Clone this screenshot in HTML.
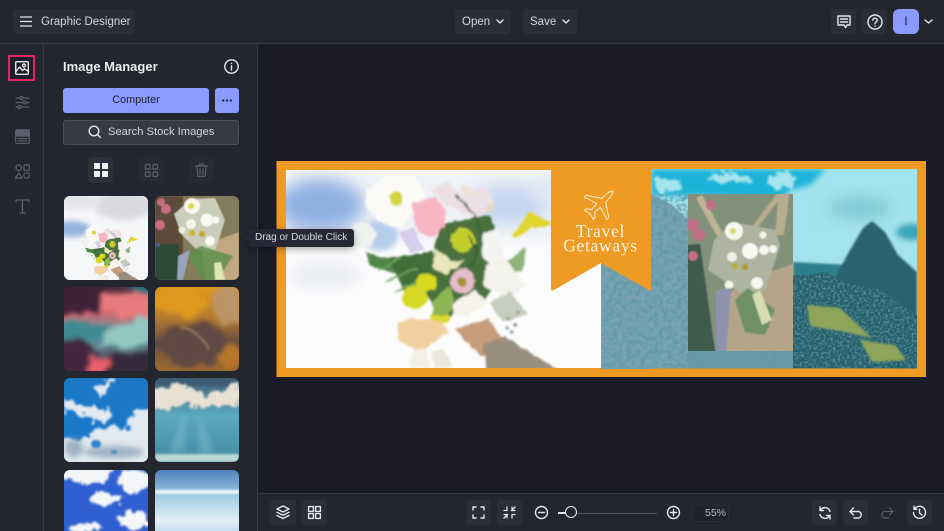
<!DOCTYPE html>
<html lang="en"><head><meta charset="utf-8"><title>Graphic Designer</title>
<style>
html,body{margin:0;padding:0;background:#1b1c28;width:944px;height:531px;overflow:hidden}
#w{position:absolute;left:0;top:0;width:944px;height:531px;overflow:hidden;font-family:"Liberation Sans",sans-serif;color:#d9dae0;background:#1b1c28}
.a{position:absolute}
.b{position:absolute;background:#2b2d3a;border-radius:4px}
.t{position:absolute;white-space:nowrap}
svg{position:absolute;overflow:visible}
.i{fill:none;stroke:#e6e7ec;stroke-width:1.4;stroke-linecap:round;stroke-linejoin:round}
.d{fill:none;stroke:#5c5f70;stroke-width:1.2;stroke-linecap:round;stroke-linejoin:round}
.th{position:absolute;width:84px;height:84px;border-radius:6px;overflow:hidden}
.th svg{left:0;top:0;overflow:hidden}
</style></head><body><div id="w">

<svg width="0" height="0" style="position:absolute"><defs>
<filter id="b1" x="-30%" y="-30%" width="160%" height="160%"><feGaussianBlur stdDeviation="1"/></filter>
<filter id="b3" x="-30%" y="-30%" width="160%" height="160%"><feGaussianBlur stdDeviation="3"/></filter>
<filter id="b8" x="-50%" y="-50%" width="200%" height="200%"><feGaussianBlur stdDeviation="8"/></filter>
<filter id="soft" x="-10%" y="-10%" width="120%" height="120%"><feTurbulence type="fractalNoise" baseFrequency=".13" numOctaves="2" seed="3" result="n"/><feDisplacementMap in="SourceGraphic" in2="n" scale="5" xChannelSelector="R" yChannelSelector="G"/><feGaussianBlur stdDeviation="1"/></filter>
<filter id="cloud" x="-20%" y="-20%" width="140%" height="140%"><feTurbulence type="fractalNoise" baseFrequency=".11" numOctaves="4" seed="7" result="n"/><feDisplacementMap in="SourceGraphic" in2="n" scale="14" xChannelSelector="R" yChannelSelector="G"/><feGaussianBlur stdDeviation="1.100"/></filter>
<filter id="cloudb" x="-20%" y="-20%" width="140%" height="140%"><feTurbulence type="fractalNoise" baseFrequency=".05" numOctaves="3" seed="5" result="n"/><feDisplacementMap in="SourceGraphic" in2="n" scale="18" xChannelSelector="R" yChannelSelector="G"/><feGaussianBlur stdDeviation="2.400"/></filter>
<filter id="rock" x="0" y="0" width="100%" height="100%"><feTurbulence type="fractalNoise" baseFrequency=".22" numOctaves="3" seed="4"/><feColorMatrix values="0 0 0 0 .12  0 0 0 0 .32  0 0 0 0 .39  3.200 0 0 0 -1.150"/></filter>
<filter id="rock2" x="0" y="0" width="100%" height="100%"><feTurbulence type="fractalNoise" baseFrequency=".42" numOctaves="2" seed="9"/><feColorMatrix values="0 0 0 0 .62  0 0 0 0 .78  0 0 0 0 .82  2.2 0 0 0 -.9"/></filter>
<linearGradient id="sun" x1="0" y1="0" x2="0" y2="1"><stop offset="0" stop-color="#4a2a40"/><stop offset=".3" stop-color="#cf6a72"/><stop offset=".6" stop-color="#5d9aa3"/><stop offset="1" stop-color="#4c2c40"/></linearGradient>
<linearGradient id="gold" x1="0" y1="0" x2="0" y2="1"><stop offset="0" stop-color="#e09a1e"/><stop offset=".35" stop-color="#b77c2e"/><stop offset=".65" stop-color="#6d5140"/><stop offset="1" stop-color="#9c6a30"/></linearGradient>
<linearGradient id="teal" x1="0" y1="0" x2="0" y2="1"><stop offset="0" stop-color="#3f5f74"/><stop offset=".45" stop-color="#5ca9bf"/><stop offset="1" stop-color="#3f8ba3"/></linearGradient>
<linearGradient id="hor" x1="0" y1="0" x2="0" y2="1"><stop offset="0" stop-color="#4f80bb"/><stop offset=".35" stop-color="#a9d3e8"/><stop offset=".6" stop-color="#e3eef6"/><stop offset="1" stop-color="#8db9e0"/></linearGradient>

<g id="bouquet">
 <path d="M365 252L400 262 432 292 402 276 370 266Z" fill="#4f8646"/>
 <path d="M388 258L432 252 436 300 405 292Z" fill="#3f7039"/>
 <path d="M440 225L490 215 505 270 480 308 440 320 425 290Z" fill="#496f3c"/>
 <path d="M505 262L526 248 522 272 502 276Z" fill="#8db27a"/>
 <path d="M378 270L400 258M385 282L418 268M395 292L428 276" fill="none" stroke="#6fa35f" stroke-width="2"/>
 <circle cx="363" cy="235" r="13" fill="#eef1ee"/>
 <path d="M366 190L392 172 416 176 426 196 412 212 400 228 378 222 366 206Z" fill="#fbfaf6"/>
 <circle cx="396" cy="198" r="7" fill="#d3d63a"/>
 <path d="M411 204L435 197 446 210 444 228 430 237 417 230Z" fill="#f8b6c4"/>
 <path d="M430 190L448 182 462 196 486 186 494 202 478 218 446 205Z" fill="#ece0e4"/>
 <circle cx="466" cy="190" r="5" fill="#f0e2d5"/>
 <circle cx="490" cy="208" r="3.500" fill="#e4dcc0"/>
 <path d="M399 232L414 228 424 250 410 252Z" fill="#d6cdea"/>
 <path d="M512 236L530 212 550 222 551 226 530 228 516 238Z" fill="#e2d52e"/>
 <circle cx="463" cy="240" r="12" fill="#c4cf2d"/>
 <path d="M482 232L498 230 504 252 498 268 483 258Z" fill="#f4f5f2"/>
 <path d="M486 264L505 258 526 286 506 298 483 286Z" fill="#f4f3ee"/>
 <path d="M435 248L455 262 466 260 446 274 432 268Z" fill="#e9e9bb"/>
 <path d="M455 195L475 215 482 235M468 235L478 250 470 268" fill="none" stroke="#36592f" stroke-width="1.600"/>
 <circle cx="463" cy="281" r="12.500" fill="#e7bccb"/>
 <circle cx="462" cy="282" r="4.500" fill="#a49336"/>
 <ellipse cx="427" cy="282" rx="10" ry="9" fill="#d9da1e"/>
 <ellipse cx="415" cy="297" rx="12" ry="12" fill="#d6da25"/>
 <ellipse cx="440" cy="318" rx="10" ry="6" fill="#dada2a"/>
 <path d="M433 302L450 286 455 305 445 316 432 316Z" fill="#8db653"/>
 <path d="M453 303L475 290 488 302 468 316 452 316Z" fill="#f6f4ea"/>
 <path d="M489 302L510 292 528 314 502 322Z" fill="#c7cdbc"/>
 <path d="M398 322L412 318 440 322 450 332 430 345 418 352 398 340Z" fill="#f2cf9f"/>
 <path d="M412 350L426 348 432 368 411 368Z" fill="#f3efe6"/>
 <path d="M432 350L444 350 453 368 434 368Z" fill="#ebe7db"/>
 <path d="M455 330L488 318 503 340 490 346 483 358 470 345Z" fill="#c69c7b"/>
 <path d="M483 344L505 337 558 370 487 370Z" fill="#9a8e7c"/>
 <g fill="#6a6e66"><circle cx="508" cy="318" r="1.400"/><circle cx="515" cy="325" r="1.400"/><circle cx="507" cy="328" r="1.400"/><circle cx="518" cy="312" r="1.400"/><circle cx="512" cy="332" r="1.400"/></g>
</g>

<g id="flat">
 <rect width="84" height="84" fill="#a89070"/>
 <rect x="0" width="34" height="84" fill="#5e4a3a"/>
 <rect x="0" y="48" width="24" height="36" fill="#2c4a34"/>
 <path d="M28 0L84 0 84 84 28 84Z" fill="#847a5c"/>
 <path d="M46 50L84 36 84 84 50 84Z" fill="#c2a783"/>
 <g fill="#c96c80"><circle cx="6" cy="6" r="4"/><circle cx="11" cy="13" r="5"/><circle cx="5" cy="29" r="5"/></g>
 <circle cx="3" cy="49" r="2.500" fill="#4c5b8a"/>
 <path d="M19 18L36 3 60 2 70 24 60 56 42 54 26 38Z" fill="#c9cdb9"/>
 <circle cx="37" cy="10" r="8" fill="#f9f8ee"/><circle cx="36" cy="10" r="3" fill="#dad84c"/>
 <circle cx="52" cy="24" r="6.500" fill="#fafaf5"/><circle cx="61" cy="24" r="3.500" fill="#fafaf5"/><circle cx="55" cy="45" r="5" fill="#fafaf5"/><circle cx="36" cy="28" r="5" fill="#f5f5e8"/><circle cx="27" cy="34" r="3.500" fill="#eeeedd"/>
 <circle cx="37" cy="37" r="3" fill="#c4bb30"/><circle cx="47" cy="38" r="3" fill="#c4a730"/>
 <path d="M32 58L46 50 78 60 62 84 48 84Z" fill="#5f8f4c" opacity=".85"/>
 <path d="M23 60L35 54 28 84 22 84Z" fill="#97a6bc"/>
 <path d="M59 67L66 66 70 84 60 84Z" fill="#dfe6b5"/>
</g>
</defs></svg>

<!-- chrome -->
<div class="a" style="left:0;top:0;width:944px;height:43px;background:#23252f"></div>
<div class="a" style="left:0;top:43px;width:944px;height:1px;background:#383a47"></div>
<div class="a" style="left:0;top:44px;width:43px;height:487px;background:#23252f"></div>
<div class="a" style="left:43px;top:44px;width:1px;height:487px;background:#383a47"></div>
<div class="a" style="left:44px;top:44px;width:213px;height:487px;background:#23252f"></div>
<div class="a" style="left:257px;top:44px;width:1px;height:487px;background:#383a47"></div>
<div class="a" style="left:258px;top:493px;width:686px;height:38px;background:#23252f"></div>
<div class="a" style="left:258px;top:493px;width:686px;height:1px;background:#383a47"></div>

<!-- top left -->
<div class="b" style="left:13px;top:9px;width:122px;height:25px"></div>
<svg style="left:19px;top:15px" width="14" height="13"><path d="M1 2H13M1 6.500H13M1 11H13" fill="none" stroke="#e6e7ec" stroke-width="1.300"/></svg>
<div class="t" style="left:41px;top:14.500px;font-size:11.500px;line-height:15px;color:#d4d5dc">Graphic Designer</div>

<!-- top center -->
<div class="b" style="left:455px;top:9px;width:56px;height:25px"></div>
<div class="t" style="left:462px;top:14.500px;font-size:11.500px;line-height:15px;color:#d4d5dc">Open</div>
<svg style="left:496px;top:19px" width="8" height="6"><path d="M1 1L4 4 7 1" class="i" stroke-width="1.100"/></svg>
<div class="b" style="left:523px;top:9px;width:54px;height:25px"></div>
<div class="t" style="left:530px;top:14.500px;font-size:11.500px;line-height:15px;color:#d4d5dc">Save</div>
<svg style="left:562px;top:19px" width="8" height="6"><path d="M1 1L4 4 7 1" class="i" stroke-width="1.100"/></svg>

<!-- top right -->
<div class="b" style="left:831px;top:9px;width:25px;height:25px"></div>
<svg style="left:837px;top:15px" width="14" height="14"><path d="M1 1H13V10H10L8.500 12.500 7 10H1Z" class="i" stroke-width="1.200"/><path d="M3.500 4H10.500M3.500 7H10.500" class="i" stroke-width="1"/></svg>
<div class="b" style="left:862px;top:9px;width:25px;height:25px"></div>
<svg style="left:867px;top:14px" width="16" height="16"><circle cx="8" cy="8" r="7" class="i" stroke-width="1.200"/><path d="M5.800 6.300C5.800 3.500 10.200 3.500 10.200 6.300 10.200 8 8 8 8 9.700" class="i" stroke-width="1.200"/><circle cx="8" cy="12" r=".8" fill="#e6e7ec"/></svg>
<div class="a" style="left:893px;top:9px;width:26px;height:25px;background:#8b9aff;border-radius:6px"></div>
<div class="t" style="left:893px;top:14.500px;width:26px;text-align:center;font-size:11.500px;line-height:15px;color:#1c1e2b">I</div>
<svg style="left:924px;top:19px" width="9" height="6"><path d="M1 1L4.500 4 8 1" class="i" stroke-width="1.100"/></svg>

<!-- rail -->
<div class="a" style="left:8px;top:55px;width:23px;height:22px;border:2.500px solid #e4245f;border-radius:1px;background:#1d1e2a"></div>
<svg style="left:15px;top:61px" width="15" height="15"><rect x=".7" y=".7" width="12.600" height="12.600" rx="1" class="i"/><circle cx="9" cy="4.500" r="1.500" class="i" stroke-width="1"/><path d="M1 10.500L4.500 6 7.500 9.500 9.500 7.800 13.500 10.500" class="i" stroke-width="1.100"/></svg>
<svg style="left:15px;top:95px" width="15" height="15"><path d="M1 3H5M8 3H14M1 7.500H8M11 7.500H14M1 12H3M6 12H14" class="d"/><circle cx="6.500" cy="3" r="1.500" class="d"/><circle cx="9.500" cy="7.500" r="1.500" class="d"/><circle cx="4.500" cy="12" r="1.500" class="d"/></svg>
<svg style="left:15px;top:129px" width="15" height="15"><rect x=".7" y=".7" width="13.600" height="13.600" rx="1" class="d"/><path d="M1 7H14" class="d"/><rect x="1" y="1" width="13" height="6" fill="#5c5f70"/><path d="M3 9.500H12M3 11.800H12" class="d"/></svg>
<svg style="left:15px;top:164px" width="15" height="15"><circle cx="3.700" cy="3.700" r="2.800" class="d"/><rect x="9" y="1" width="5.300" height="5.300" class="d"/><path d="M3.700 9L7 14H.5Z" class="d"/><circle cx="11.500" cy="11.500" r="2.800" class="d"/></svg>
<svg style="left:15px;top:199px" width="15" height="15"><path d="M1 3V1H14V3M7.500 1V14M5 14H10" class="d" stroke-width="1.300"/></svg>

<!-- panel -->
<div class="t" style="left:63px;top:58px;font-size:13px;line-height:17px;font-weight:700;color:#eceded">Image Manager</div>
<svg style="left:224px;top:59px" width="15" height="15"><circle cx="7.500" cy="7.500" r="6.700" class="i" stroke-width="1.100"/><path d="M7.500 7V11" class="i" stroke-width="1.300"/><circle cx="7.500" cy="4.500" r=".8" fill="#e6e7ec"/></svg>
<div class="a" style="left:63px;top:88px;width:146px;height:25px;background:#8b9aff;border-radius:3px"></div>
<div class="t" style="left:63px;top:93px;width:146px;text-align:center;font-size:10.800px;line-height:15px;color:#1c1e2b">Computer</div>
<div class="a" style="left:215px;top:88px;width:24px;height:25px;background:#8b9aff;border-radius:3px"></div>
<svg style="left:222px;top:99px" width="10" height="3"><circle cx="1.200" cy="1.500" r="1.100" fill="#1c1e2b"/><circle cx="5" cy="1.500" r="1.100" fill="#1c1e2b"/><circle cx="8.800" cy="1.500" r="1.100" fill="#1c1e2b"/></svg>
<div class="a" style="left:63px;top:120px;width:174px;height:23px;background:#373945;border:1px solid #4b4d5a;border-radius:3px"></div>
<svg style="left:88px;top:125px" width="14" height="14"><circle cx="6" cy="6" r="4.800" class="i" stroke-width="1.200"/><path d="M9.500 9.500L12.500 12.500" class="i" stroke-width="1.200"/></svg>
<div class="t" style="left:108px;top:125px;font-size:11.200px;line-height:15px;color:#d4d5dc">Search Stock Images</div>

<div class="b" style="left:88px;top:157px;width:25px;height:26px;background:#2d2f3b"></div>
<svg style="left:94px;top:163px" width="14" height="14"><g fill="#f1f1f3"><rect width="6" height="6" rx=".5"/><rect x="8" width="6" height="6" rx=".5"/><rect y="8" width="6" height="6" rx=".5"/><rect x="8" y="8" width="6" height="6" rx=".5"/></g></svg>
<div class="b" style="left:138px;top:157px;width:26px;height:26px;background:#272935"></div>
<svg style="left:145px;top:164px" width="13" height="13"><rect x=".5" y=".5" width="4.500" height="4.500" class="d"/><rect x="8" y=".5" width="4.500" height="4.500" class="d"/><rect x=".5" y="8" width="4.500" height="4.500" class="d"/><rect x="8" y="8" width="4.500" height="4.500" class="d"/></svg>
<div class="b" style="left:189px;top:157px;width:25px;height:26px;background:#272935"></div>
<svg style="left:195px;top:163px" width="13" height="14"><path d="M.5 3H12.500M4.500 3V1H8.500V3M2 3L2.800 13.300H10.200L11 3M5 6V11M8 6V11" class="d"/></svg>

<!-- thumbs -->
<div class="th" style="left:64px;top:196px;background:#f4f5f7"><svg width="84" height="84" viewBox="0 0 84 84">
 <rect width="84" height="84" fill="#f6f7f9"/><ellipse cx="8" cy="33" rx="18" ry="8" fill="#93b3dc" filter="url(#b3)"/><ellipse cx="60" cy="10" rx="30" ry="14" fill="#d9dade" filter="url(#b3)"/><ellipse cx="15" cy="6" rx="20" ry="8" fill="#e4e5e9" filter="url(#b3)"/>
 <g transform="translate(-81 -19) scale(.28)"><use href="#bouquet" filter="url(#soft)"/></g>
</svg></div>
<div class="th" style="left:155px;top:196px"><svg width="84" height="84" viewBox="0 0 84 84"><g filter="url(#b1)" style="filter:blur(.5px)"><rect x="-8" y="-8" width="100" height="100" fill="#8a7a5c"/><use href="#flat"/></g></svg></div>

<div class="th" style="left:64px;top:287px"><svg width="84" height="84" viewBox="0 0 84 84"><rect width="84" height="84" fill="url(#sun)"/>
 <g filter="url(#cloudb)">
 <path d="M54 -8L94 -8 94 10 72 8Z" fill="#1f6d78"/>
 <path d="M-8 -8H42L50 14 30 24 -8 34Z" fill="#3f2438"/>
 <path d="M44 4L94 10 90 32 54 32 36 22Z" fill="#e87a7c"/>
 <path d="M-8 40L30 34 50 44 30 52 -8 50Z" fill="#3e8a92"/>
 <path d="M34 58L60 36 94 30 94 54 55 62Z" fill="#93c6c0"/>
 <path d="M-8 50L24 50 32 64 20 94 -8 94Z" fill="#43283f"/>
 <path d="M34 94L44 70 94 60 94 94Z" fill="#352a3d"/>
 <path d="M16 94L30 70 44 78 42 94Z" fill="#e9616b"/>
 </g></svg></div>
<div class="th" style="left:155px;top:287px"><svg width="84" height="84" viewBox="0 0 84 84"><rect width="84" height="84" fill="url(#gold)"/>
 <g filter="url(#cloudb)"><ellipse cx="25" cy="15" rx="28" ry="13" fill="#df9a1c"/><ellipse cx="72" cy="18" rx="14" ry="20" fill="#bb9468"/><ellipse cx="38" cy="58" rx="38" ry="22" fill="#5f4a42"/><ellipse cx="75" cy="68" rx="12" ry="12" fill="#b8762a"/></g><path d="M26 40Q42 42 54 62" fill="none" stroke="#9a7a5a" stroke-width="2" filter="url(#b1)"/></svg></div>

<div class="th" style="left:64px;top:378px"><svg width="84" height="84" viewBox="0 0 84 84"><rect width="84" height="84" fill="#1a78c8"/>
 <g fill="#e2e9ef" filter="url(#cloud)"><path d="M0 20L20 28 46 30 50 40 30 45 10 32 0 36Z"/><path d="M32 8L50 0 42 14 36 22Z"/><path d="M-5 90V62L22 60 40 48 58 52 70 36 90 26V90Z"/></g>
 <g fill="#9fb2c4" filter="url(#b3)"><ellipse cx="50" cy="74" rx="30" ry="6"/><ellipse cx="10" cy="70" rx="9" ry="9"/></g>
 <g fill="#2a7fca" filter="url(#b1)"><ellipse cx="32" cy="66" rx="5" ry="4"/><ellipse cx="50" cy="74" rx="3" ry="1.500"/><ellipse cx="64" cy="50" rx="3" ry="3"/></g></svg></div>
<div class="th" style="left:155px;top:378px"><svg width="84" height="84" viewBox="0 0 84 84"><rect width="84" height="84" fill="url(#teal)"/>
 <rect width="84" height="8" fill="#3e5c72" filter="url(#b1)"/><path d="M-5 12L30 6 50 16 90 6V26L50 30 30 26 -5 36Z" fill="#e8e1d4" filter="url(#cloud)"/>
 <g fill="#a5d6df" opacity=".3" filter="url(#b3)"><path d="M30 34L14 74H30Z"/><path d="M44 36L44 76H60Z"/></g><rect y="76" width="84" height="8" fill="#bcd7d4" filter="url(#b1)"/></svg></div>

<div class="th" style="left:64px;top:470px"><svg width="84" height="84" viewBox="0 0 84 84"><rect width="84" height="84" fill="#2f5fd0"/>
 <g fill="#f4f6f8" filter="url(#cloud)"><path d="M-5 -5H50L42 12 22 16 8 10 -5 8Z"/><ellipse cx="70" cy="11" rx="16" ry="11"/><ellipse cx="42" cy="29" rx="16" ry="6"/><ellipse cx="70" cy="50" rx="16" ry="9"/><ellipse cx="22" cy="58" rx="16" ry="5"/></g></svg></div>
<div class="th" style="left:155px;top:470px"><svg width="84" height="84" viewBox="0 0 84 84"><rect width="84" height="84" fill="url(#hor)"/><rect y="20" width="84" height="4" fill="#eef6f8" filter="url(#b1)"/></svg></div>

<!-- design -->
<svg style="left:276px;top:161px" width="650" height="216" viewBox="276 161 650 216">
 <rect x="276.500" y="161" width="649.500" height="216" fill="#ef9a23"/>
 <clipPath id="c1"><rect x="286" y="170" width="316" height="198"/></clipPath>
 <clipPath id="c2"><rect x="651" y="169" width="266" height="199.500"/></clipPath>
 <clipPath id="c3"><rect x="688" y="194" width="105" height="157"/></clipPath>
 <clipPath id="c4"><path d="M790 276L826 272 846 283 880 290 917 315V369H790Z"/></clipPath>
 <g clip-path="url(#c1)">
  <rect x="286" y="170" width="316" height="198" fill="#fcfcfd"/>
  <rect x="286" y="170" width="316" height="70" fill="#eef1f6" filter="url(#b8)"/>
  <ellipse cx="320" cy="205" rx="44" ry="26" fill="#90b2e2" filter="url(#b8)"/>
  <ellipse cx="380" cy="235" rx="18" ry="16" fill="#b7cdec" filter="url(#b3)"/>
  <ellipse cx="510" cy="205" rx="40" ry="20" fill="#c5d7f0" filter="url(#b8)"/>
  <ellipse cx="325" cy="275" rx="36" ry="12" fill="#e8ebf1" filter="url(#b8)"/>
  <ellipse cx="560" cy="190" rx="30" ry="14" fill="#dfe7f4" filter="url(#b8)"/>
  <use href="#bouquet" filter="url(#soft)"/>
 </g>

 <g clip-path="url(#c2)">
  <rect x="651" y="169" width="266" height="200" fill="#a3e3ed"/>
  <path d="M651 169H826L810 185 790 190 780 200 700 196 651 196Z" fill="#1eb3d8" filter="url(#b3)"/>
  <g fill="#a6e4ee" filter="url(#cloud)"><ellipse cx="668" cy="185" rx="14" ry="8"/><ellipse cx="730" cy="178" rx="22" ry="5"/><ellipse cx="783" cy="181" rx="14" ry="9"/></g>
  <ellipse cx="860" cy="208" rx="32" ry="10" fill="#7fc5d4" filter="url(#b8)"/>
  <ellipse cx="912" cy="232" rx="16" ry="8" fill="#3da4ba" filter="url(#b3)"/>
  <path d="M793 262L850 265 838 300 793 290Z" fill="#2e7f8d" filter="url(#b1)"/>
  <path d="M836 276L850 250 863 228 872 221 885 232 898 255 917 272V330L860 310 825 290Z" fill="#2a626f" filter="url(#b1)"/>
  <rect x="790" y="270" width="127" height="100" fill="#22606d" clip-path="url(#c4)"/>
  <g clip-path="url(#c4)"><rect x="790" y="270" width="127" height="100" filter="url(#rock2)" opacity=".4"/></g>
  <path d="M807 305L840 308 872 338 845 332 810 326Z" fill="#8ea55a" filter="url(#b1)"/>
  <path d="M860 340L895 345 906 360 872 362Z" fill="#8ea55a" filter="url(#b1)"/>
  <path d="M651 194L672 205 690 222V369H651Z" fill="#7aa3b2"/>
  <rect x="688" y="345" width="105" height="24" fill="#6b98a8"/>
 </g>
 <path d="M601 263L651 291V369H601Z" fill="#7aa3b2"/>
 <rect x="602" y="262" width="49" height="106.500" filter="url(#rock)" opacity=".8"/>
 <g clip-path="url(#c2)"><rect x="651" y="194" width="40" height="174.500" filter="url(#rock)" opacity=".8"/>
 <rect x="688" y="351" width="105" height="18" filter="url(#rock)" opacity=".8"/></g>
 <path d="M551 263H602V369H551Z" fill="none"/>

 <g clip-path="url(#c3)"><g style="filter:blur(.8px)">
  <rect x="680" y="186" width="120" height="172" fill="#82917a"/>
  <path d="M680 245L700 244 716 358H680Z" fill="#3f5b4d"/>
  <path d="M722 300L745 280 800 262V358H716Z" fill="#b4a58a"/>
  <path d="M696 198L702 195 733 252 728 256Z" fill="#c0b494"/>
  <path d="M779 190H790L784 235H775Z" fill="#b7ac8e"/>
  <path d="M748 232L778 192 782 196 752 235Z" fill="#b7ac8e"/>
  <g fill="#c26f85"><circle cx="711" cy="205" r="5"/><circle cx="693" cy="225" r="6"/><circle cx="699" cy="235" r="6"/><circle cx="693" cy="256" r="5"/></g>
  <path d="M714 240L733 222 776 230 780 246 765 290 740 292 708 270Z" fill="#aeb4a0"/>
  <circle cx="734" cy="231" r="9" fill="#f7f8ef"/><circle cx="733" cy="231" r="3" fill="#d2d66a"/>
  <circle cx="750" cy="251" r="8" fill="#fafaf5"/><circle cx="764" cy="250" r="5" fill="#f7f7f2"/><circle cx="773" cy="249" r="4" fill="#f7f7f2"/><circle cx="732" cy="257" r="5" fill="#eff0e6"/><circle cx="757" cy="283" r="6" fill="#f5f6f0"/><circle cx="729" cy="285" r="4.500" fill="#f5f6ea"/><circle cx="763" cy="235" r="3.500" fill="#f5f6ea"/>
  <circle cx="735" cy="266" r="3" fill="#b5b132"/><circle cx="745" cy="267" r="3" fill="#b7962f"/>
  <path d="M735 300L748 288 775 310 765 335 745 332Z" fill="#5e8a5c" opacity=".8"/>
  <path d="M716 290L731 288 726 358 716 358Z" fill="#8d93ad"/>
  <path d="M752 295L760 290 772 320 762 325Z" fill="#d4dcb0"/>
 </g></g>

 <path d="M551 161H651V289.500Q651 291 649.500 290.500L601 263 553 290.500Q551 291 551 289Z" fill="#ef9a23"/>
 <g transform="translate(601 203) rotate(45)"><path d="M0 -17C2 -15 2.500 -12 2.500 -8L2.500 -4 16 5 16 7.500 2.500 3.500 2 11 6.500 15 6.500 17 0 15.500 -6.500 17 -6.500 15 -2 11 -2.500 3.500 -16 7.500 -16 5 -2.500 -4 -2.500 -8C-2.500 -12 -2 -15 0 -17Z" fill="none" stroke="#fff6e6" stroke-width=".9" stroke-linejoin="round"/></g>
 <text x="600.500" y="237" text-anchor="middle" font-family="Liberation Serif,serif" font-size="17.500" letter-spacing=".7" fill="#fff6e6">Travel</text>
 <text x="600.500" y="251.500" text-anchor="middle" font-family="Liberation Serif,serif" font-size="17.500" letter-spacing=".7" fill="#fff6e6">Getaways</text>
</svg>

<!-- tooltip -->
<div class="a" style="left:249px;top:229px;width:105px;height:18px;background:#252736;border-radius:3px;box-shadow:0 2px 8px rgba(0,0,0,.35)"></div>
<svg style="left:244px;top:231px" width="6" height="14"><path d="M6 0L0 7 6 14Z" fill="#252736"/></svg>
<div class="t" style="left:255px;top:231px;font-size:10px;line-height:14px;color:#d9dae0">Drag or Double Click</div>

<!-- bottom -->
<div class="b" style="left:270px;top:500px;width:26px;height:25px"></div>
<svg style="left:276px;top:505px" width="14" height="15"><path d="M7 1L13 4 7 7 1 4Z" class="i" stroke-width="1.100"/><path d="M1 7.300L7 10.300 13 7.300M1 10.500L7 13.500 13 10.500" class="i" stroke-width="1.100"/></svg>
<div class="b" style="left:302px;top:500px;width:25px;height:25px"></div>
<svg style="left:308px;top:506px" width="13" height="13"><rect x=".6" y=".6" width="4.800" height="4.800" class="i" stroke-width="1.100"/><rect x="7.600" y=".6" width="4.800" height="4.800" class="i" stroke-width="1.100"/><rect x=".6" y="7.600" width="4.800" height="4.800" class="i" stroke-width="1.100"/><rect x="7.600" y="7.600" width="4.800" height="4.800" class="i" stroke-width="1.100"/></svg>

<div class="b" style="left:466px;top:500px;width:25px;height:25px"></div>
<svg style="left:472px;top:506px" width="13" height="13"><path d="M1 4V1H4M9 1H12V4M12 9V12H9M4 12H1V9" class="i" stroke-width="1.300" stroke-linecap="butt"/></svg>
<div class="b" style="left:497px;top:500px;width:25px;height:25px"></div>
<svg style="left:503px;top:506px" width="13" height="13"><path d="M1 4.500H4V1M12 8.500H9V12M1 8.500H4V12M9 1V4.500H12" class="d" style="stroke:#e6e7ec" stroke-width="1.200"/><path d="M8.500 4.500L12 1M4.500 8.500L1 12" class="i" stroke-width="1.100"/></svg>
<svg style="left:534px;top:505px" width="15" height="15"><circle cx="7.500" cy="7.500" r="6" class="i" stroke-width="1.200"/><path d="M4.500 7.500H10.500" class="i" stroke-width="1.200"/></svg>
<div class="a" style="left:558px;top:512px;width:10px;height:1.500px;background:#e6e7ec"></div>
<div class="a" style="left:577px;top:512.500px;width:80px;height:1px;background:#565866"></div>
<div class="a" style="left:565px;top:506px;width:10px;height:10px;border:1.500px solid #eee;border-radius:50%;background:#23252f"></div>
<svg style="left:666px;top:505px" width="15" height="15"><circle cx="7.500" cy="7.500" r="6" class="i" stroke-width="1.200"/><path d="M4.500 7.500H10.500M7.500 4.500V10.500" class="i" stroke-width="1.200"/></svg>
<div class="a" style="left:692px;top:505px;width:35px;height:15px;border:1px solid #33354180;border-radius:3px;background:#20222c"></div>
<div class="t" style="left:692px;top:505.500px;width:34px;text-align:right;font-size:10.500px;line-height:15px;color:#b9bac2">55%</div>

<div class="b" style="left:812px;top:500px;width:25px;height:25px"></div>
<svg style="left:818px;top:506px" width="14" height="14"><path d="M12 5.500A5.300 5.300 0 0 0 2.500 4M2 8.500A5.300 5.300 0 0 0 11.500 10" class="i" stroke-width="1.300"/><path d="M2 1V4.500H5.500M12 13V9.500H8.500" class="i" stroke-width="1.300"/></svg>
<div class="b" style="left:843px;top:500px;width:25px;height:25px"></div>
<svg style="left:849px;top:507px" width="14" height="12"><path d="M4.500 1L1 4.500 4.500 8M1 4.500H9.500A3.300 3.300 0 0 1 9.500 11H5" class="i" stroke-width="1.200"/></svg>
<svg style="left:880px;top:507px" width="14" height="12"><path d="M9.500 1L13 4.500 9.500 8M13 4.500H4.500A3.300 3.300 0 0 0 4.500 11H9" class="d" stroke-width="1.200"/></svg>
<div class="b" style="left:907px;top:500px;width:25px;height:25px"></div>
<svg style="left:912px;top:505px" width="15" height="15"><path d="M2.500 4A6 6 0 1 1 1.500 7.500M2 1.300V4.300H5M7.500 4.500V8L10 10" class="i" stroke-width="1.300"/></svg>
</div></body></html>
